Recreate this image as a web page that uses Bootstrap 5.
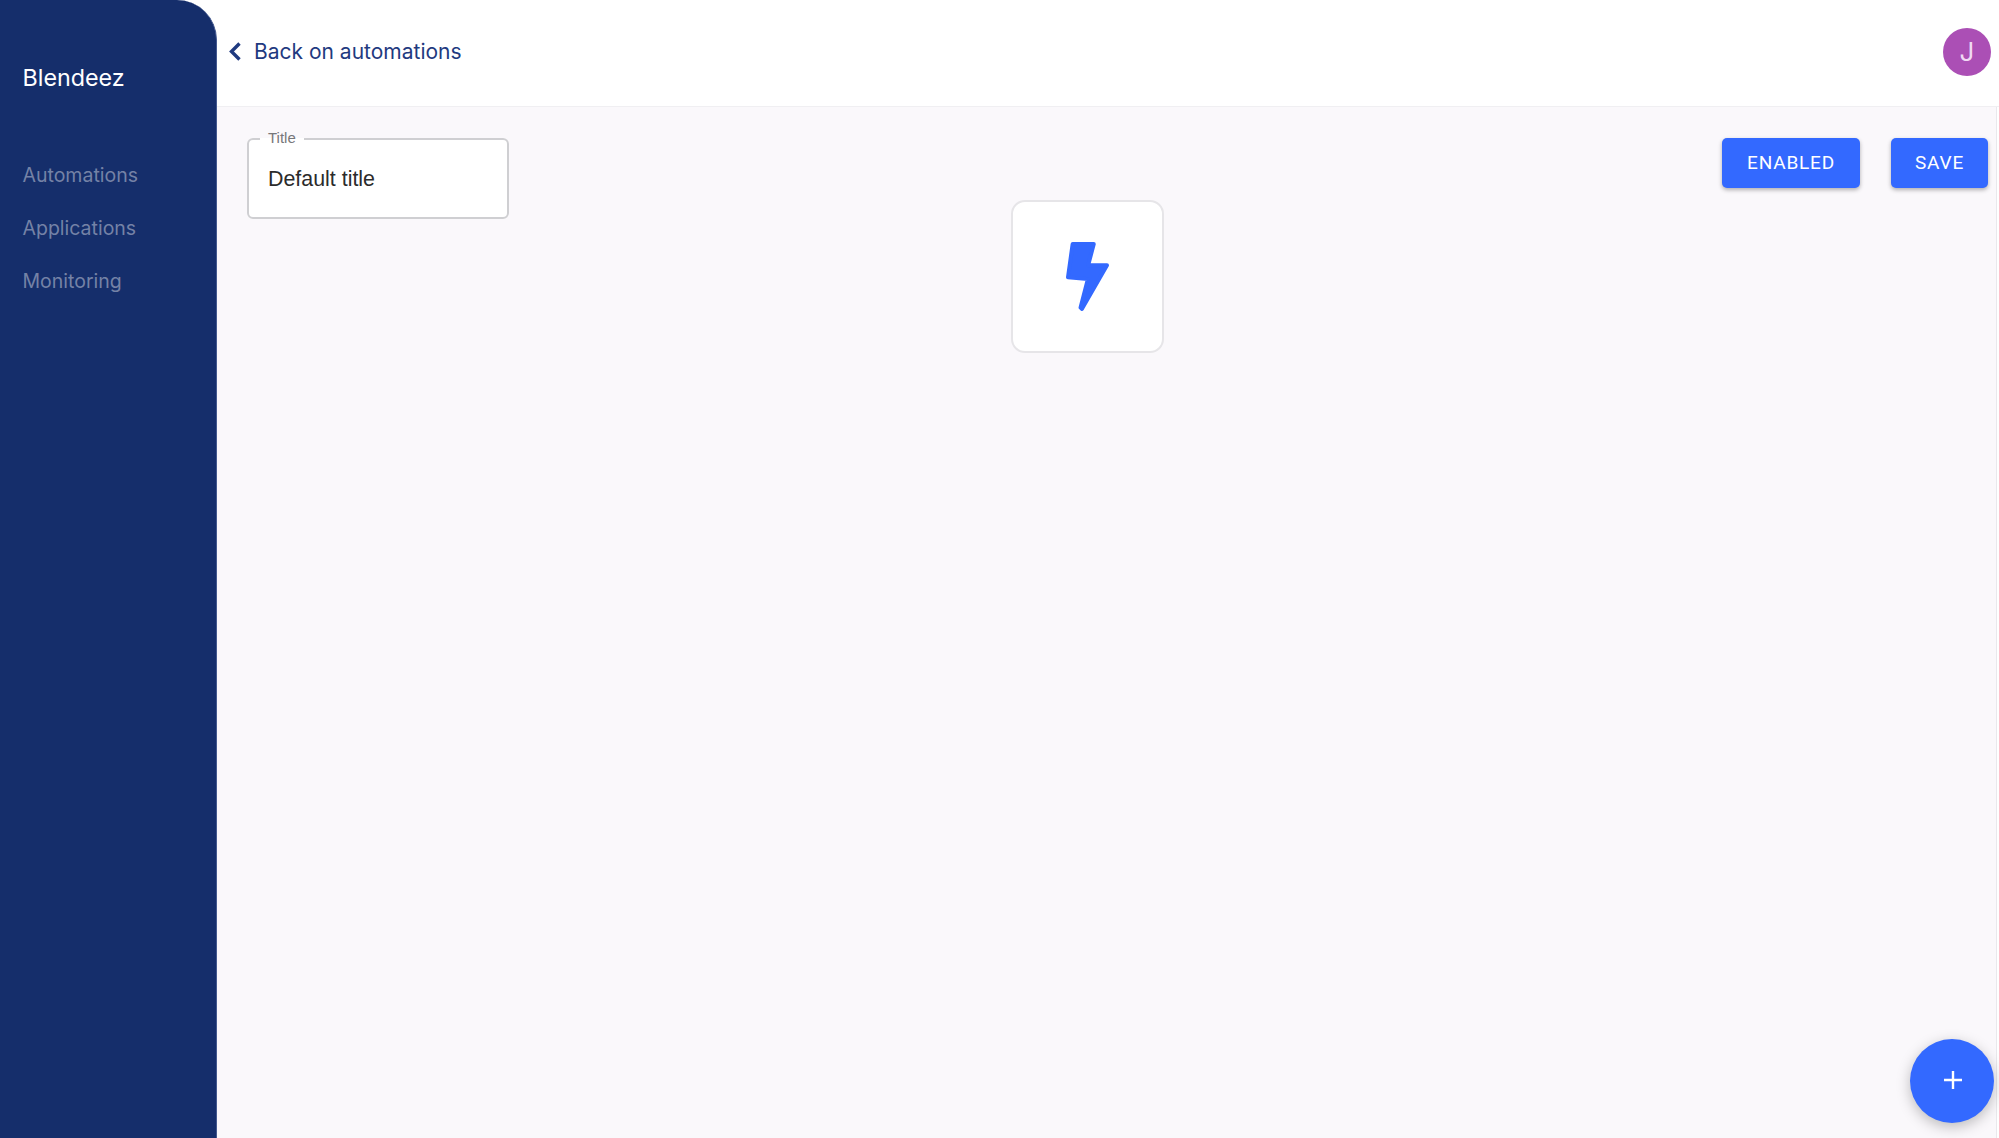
<!DOCTYPE html>
<html lang="en">
<head>
  <meta charset="UTF-8" />
  <meta name="viewport" content="width=device-width, initial-scale=1.0"/>
  <title>Blendeez - Automation</title>
  <link href="https://cdn.jsdelivr.net/npm/bootstrap@5.3.0/dist/css/bootstrap.min.css" rel="stylesheet"/>
  <style>
    html, body { height: 100%; }
    body {
      background: #fff;
      font-family: Inter, Roboto, "Liberation Sans", sans-serif;
      overflow: hidden;
    }

    /* Sidebar */
    .side-bar {
      width: 217px;
      flex: none;
      background: #152e6b;
      border-right: 1px solid #44598f;
      border-top-right-radius: 40px;
    }
    .brand-name {
      color: #fff;
      font-size: 23.3px;
      line-height: 28px;
      padding: 64px 0 0 22.5px;
      margin-bottom: 71px;
    }
    .side-link {
      color: #7482a6;
      font-size: 19.5px;
      line-height: 24px;
      padding: 0 0 0 22.5px;
      margin-bottom: 29px;
    }
    .side-link:hover { color: #fff; }

    /* Header */
    .top-head {
      height: 107px;
      padding: 0 8px 3px 11px;
      border-bottom: 1px solid #f0eff2;
    }
    .back-link {
      color: #1f3a80;
      font-size: 21px;
      text-decoration: none;
      gap: 12px;
    }
    .user-pic {
      width: 48px;
      height: 48px;
      background: #ab4fb5;
      color: #f0d9f3;
      font-size: 26px;
    }

    /* Content */
    .work-area {
      background: #faf8fb;
      margin-right: 2px;
      border-right: 1px solid #e9e8ec;
      padding: 22px 8px 0 30px;
    }
    .title-box {
      width: 262px;
      height: 90px;
      margin: 0;
      padding: 0 19px;
      background: #fff;
      border: 2px solid #cfcfd2;
      border-radius: 6px;
    }
    .title-box legend {
      float: none;
      width: auto;
      margin: 0 0 0 -8px;
      padding: 0 8px 2px;
      font-family: "Liberation Sans", sans-serif;
      font-size: 15px;
      line-height: 18px;
      color: #77777a;
    }
    .title-box input {
      font-family: "Liberation Sans", sans-serif;
      font-size: 21.4px;
      color: #2b2b2b;
      border: 0;
      outline: 0;
      padding: 0;
      margin-top: 14px;
      width: 100%;
      background: transparent;
    }
    .act-btn {
      height: 50px;
      background: #3369ff;
      border: 0;
      color: #fff;
      font-family: Roboto, sans-serif;
      font-size: 19px;
      letter-spacing: .8px;
      border-radius: 5px;
      box-shadow: 0 2px 4px rgba(0,0,0,.3);
      padding: 0;
    }
    .act-btn:hover { background: #2a5ce6; color: #fff; }
    .act-row {
      gap: 31px;
      margin-top: 9px;
    }
    .btn-enabled { width: 138px; }
    .btn-save { width: 97px; }

    /* Node on the canvas */
    .bolt-node {
      position: absolute;
      left: 794px;
      top: 93px;
      width: 153px;
      height: 153px;
      background: #fff;
      border: 2px solid #e6e5e8;
      border-radius: 14px;
    }
    .add-fab {
      position: absolute;
      right: 2px;
      bottom: 15px;
      width: 84px;
      height: 84px;
      padding: 0 0 2px 2px;
      border: 0;
      background: #3369ff;
      box-shadow: 0 4px 14px rgba(0,0,0,.25);
    }
  </style>
</head>
<body>

<div class="d-flex h-100">
  <!-- Sidebar -->
  <aside class="side-bar">
    <div class="brand-name">Blendeez</div>
    <nav class="nav flex-column">
      <a class="nav-link side-link" href="#">Automations</a>
      <a class="nav-link side-link" href="#">Applications</a>
      <a class="nav-link side-link" href="#">Monitoring</a>
    </nav>
  </aside>

  <div class="d-flex flex-column flex-grow-1 position-relative">
    <!-- Header -->
    <header class="top-head d-flex align-items-center justify-content-between flex-none">
      <a class="back-link d-flex align-items-center" href="#">
        <svg width="14" height="22" viewBox="0 0 14 22"><path d="M11.5 2.5 3.5 10.500l8 8" fill="none" stroke="#1f3a80" stroke-width="3.4"/></svg>
        <span>Back on automations</span>
      </a>
      <div class="user-pic rounded-circle d-flex align-items-center justify-content-center">J</div>
    </header>

    <!-- Content -->
    <main class="work-area flex-grow-1 position-relative">
      <div class="d-flex align-items-start justify-content-between">
        <fieldset class="title-box">
          <legend>Title</legend>
          <input type="text" value="Default title" aria-label="Title"/>
        </fieldset>
        <div class="act-row d-flex">
          <button type="button" class="btn act-btn btn-enabled">ENABLED</button>
          <button type="button" class="btn act-btn btn-save">SAVE</button>
        </div>
      </div>

      <div class="bolt-node d-flex align-items-center justify-content-center">
        <svg width="43" height="69" viewBox="0 0 130 208"><path d="M20 6H84L67 70H124L48 202 44 198 66 112 6 106Z" fill="#3369ff" stroke="#3369ff" stroke-width="12" stroke-linejoin="round"/></svg>
      </div>

      <button type="button" class="btn add-fab rounded-circle d-flex align-items-center justify-content-center" aria-label="Add">
        <svg width="20" height="20" viewBox="0 0 20 20"><path d="M10 1v18M1 10h18" stroke="#fff" stroke-width="2.4"/></svg>
      </button>
    </main>
  </div>
</div>

<script src="https://cdn.jsdelivr.net/npm/bootstrap@5.3.0/dist/js/bootstrap.bundle.min.js"></script>
</body>
</html>
